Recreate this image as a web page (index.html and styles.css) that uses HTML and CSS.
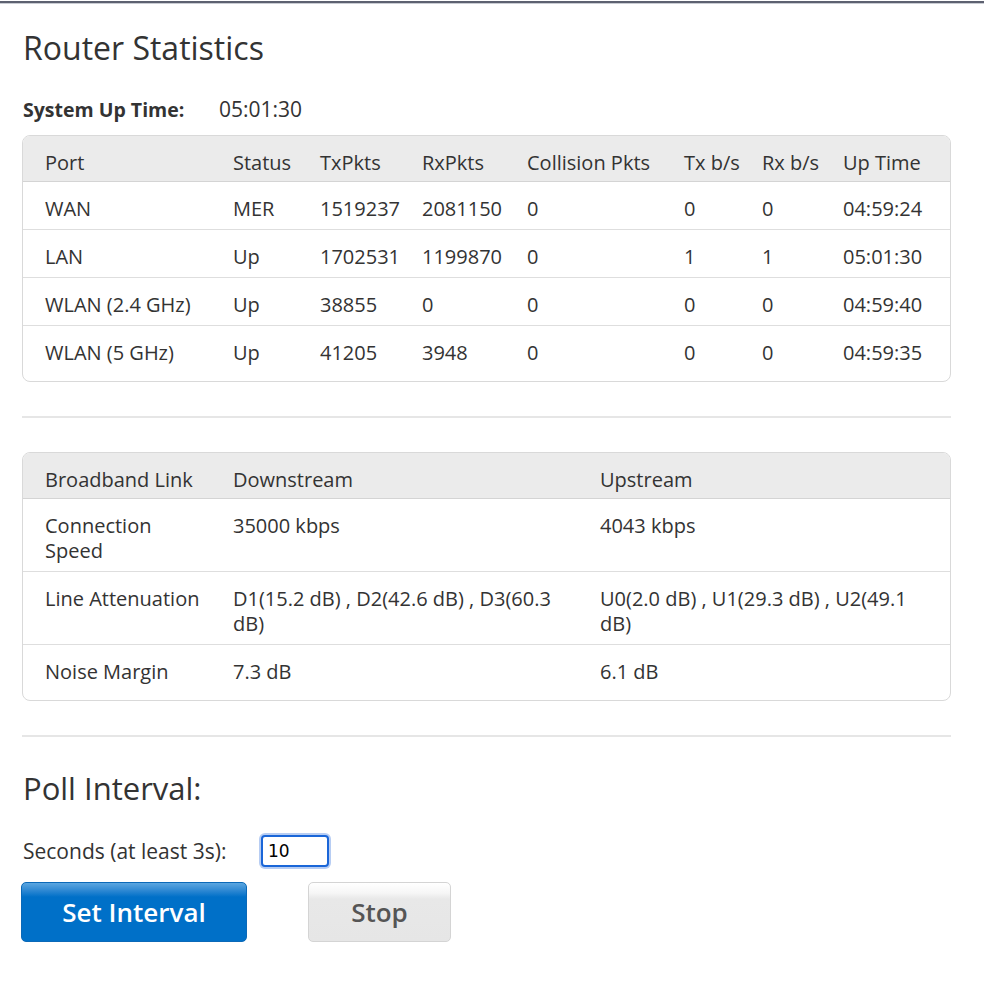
FILE: index.html
```html
<!DOCTYPE html>
<html lang="en">
<head>
  <meta charset="UTF-8">
  <title>Router Statistics</title>
  <link rel="stylesheet" href="styles.css">
</head>
<body>
  <div class="top-rule"></div>
  <div class="page">
    <h1 class="title">Router Statistics</h1>

    <div class="uptime">
      <span class="uptime-label">System Up Time:</span>
      <span class="uptime-value">05:01:30</span>
    </div>

    <div class="stat-box">
      <table class="stat-table">
        <colgroup>
          <col style="width:188px"><col style="width:87px"><col style="width:102px"><col style="width:105px">
          <col style="width:157px"><col style="width:78px"><col style="width:81px"><col>
        </colgroup>
        <thead>
          <tr><th>Port</th><th>Status</th><th>TxPkts</th><th>RxPkts</th><th>Collision Pkts</th><th>Tx b/s</th><th>Rx b/s</th><th>Up Time</th></tr>
        </thead>
        <tbody>
          <tr><td>WAN</td><td>MER</td><td>1519237</td><td>2081150</td><td>0</td><td>0</td><td>0</td><td>04:59:24</td></tr>
          <tr><td>LAN</td><td>Up</td><td>1702531</td><td>1199870</td><td>0</td><td>1</td><td>1</td><td>05:01:30</td></tr>
          <tr><td>WLAN (2.4 GHz)</td><td>Up</td><td>38855</td><td>0</td><td>0</td><td>0</td><td>0</td><td>04:59:40</td></tr>
          <tr><td>WLAN (5 GHz)</td><td>Up</td><td>41205</td><td>3948</td><td>0</td><td>0</td><td>0</td><td>04:59:35</td></tr>
        </tbody>
      </table>
    </div>

    <hr class="divider">

    <div class="stat-box">
      <table class="stat-table">
        <colgroup>
          <col style="width:188px"><col style="width:367px"><col>
        </colgroup>
        <thead>
          <tr><th>Broadband Link</th><th>Downstream</th><th>Upstream</th></tr>
        </thead>
        <tbody>
          <tr><td class="narrow">Connection Speed</td><td>35000 kbps</td><td>4043 kbps</td></tr>
          <tr><td>Line Attenuation</td><td>D1(15.2 dB) , D2(42.6 dB) , D3(60.3 dB)</td><td class="wrap-up">U0(2.0 dB) , U1(29.3 dB) , U2(49.1 dB)</td></tr>
          <tr><td>Noise Margin</td><td>7.3 dB</td><td>6.1 dB</td></tr>
        </tbody>
      </table>
    </div>

    <hr class="divider">

    <h2 class="poll-title">Poll Interval:</h2>
    <div class="poll-row">
      <label for="interval" class="poll-label">Seconds (at least 3s):</label>
      <input type="text" id="interval" class="poll-input" value="10">
    </div>
    <div class="buttons">
      <button class="btn btn-primary">Set Interval</button>
      <button class="btn btn-plain">Stop</button>
    </div>
  </div>
</body>
</html>
```

FILE: styles.css
```css
body {
  margin: 0;
  background: #fff;
  font-family: "Open Sans", Arial, sans-serif;
  color: #333;
}

.top-rule {
  height: 2px;
  margin-top: 1px;
  background: #5d6170;
  border-bottom: 1px solid #c9ccd3;
}

.page {
  padding: 0 33px 60px 22px;
}

.title {
  margin: 24px 0 0 1px;
  font-size: 32px;
  font-weight: normal;
  line-height: 40px;
  color: #333;
}

.uptime {
  display: flex;
  align-items: baseline;
  margin: 28px 0 0 1px;
  line-height: 26px;
}

.uptime-label {
  width: 196px;
  font-size: 19.5px;
  font-weight: bold;
}

.uptime-value {
  font-size: 21px;
}

.stat-box {
  margin-top: 12px;
  border: 1px solid #d9d9d9;
  border-radius: 8px;
  padding-bottom: 8px;
  overflow: hidden;
}

.stat-table {
  width: 100%;
  border-collapse: collapse;
  table-layout: fixed;
  font-size: 20px;
  line-height: 25px;
}

.stat-table th,
.stat-table td {
  text-align: left;
  font-weight: normal;
  vertical-align: top;
  padding: 14px 0 8px 22px;
}

.stat-table thead tr {
  background: #ebebeb;
}

.stat-table th {
  padding-bottom: 6px;
  border-bottom: 1px solid #d4d4d4;
}

.stat-table tbody tr + tr td {
  border-top: 1px solid #dedede;
}

.stat-table .narrow {
  padding-right: 20px;
}

.stat-table .wrap-up {
  padding-right: 20px;
}

.divider {
  margin: 34px 0 0;
  border: 0;
  border-top: 2px solid #e6e6e6;
}

.divider + .stat-box {
  margin-top: 34px;
}

.poll-title {
  margin: 31px 0 0 1px;
  font-size: 31px;
  font-weight: normal;
  line-height: 40px;
}

.poll-row {
  display: flex;
  align-items: center;
  margin-top: 27px;
  margin-left: 1px;
}

.poll-label {
  width: 238px;
  font-size: 21px;
}

.poll-input {
  width: 54px;
  height: 28px;
  padding: 0 5px;
  border: 2px solid #1a66d8;
  border-radius: 4px;
  box-shadow: 0 0 0 2px #b7cdf3;
  font-family: "DejaVu Sans", Verdana, sans-serif;
  font-size: 17px;
  color: #000;
  outline: none;
}

.buttons {
  display: flex;
  gap: 61px;
  margin-top: 15px;
  margin-left: -1px;
}

.btn {
  height: 60px;
  border-radius: 5px;
  font-family: "Open Sans", Arial, sans-serif;
  font-size: 26px;
  font-weight: 600;
  cursor: pointer;
}

.btn-primary {
  width: 226px;
  border: 1px solid #0b69b8;
  color: #fff;
  background: linear-gradient(#5ba6e0 0, #2a86d2 8px, #0070c8 14px, #0070c8 100%);
}

.btn-plain {
  width: 143px;
  border: 1px solid #d4d4d4;
  color: #555;
  background: linear-gradient(#ffffff 0, #f6f6f6 10px, #e8e8e8 16px, #e6e6e6 100%);
}
```
